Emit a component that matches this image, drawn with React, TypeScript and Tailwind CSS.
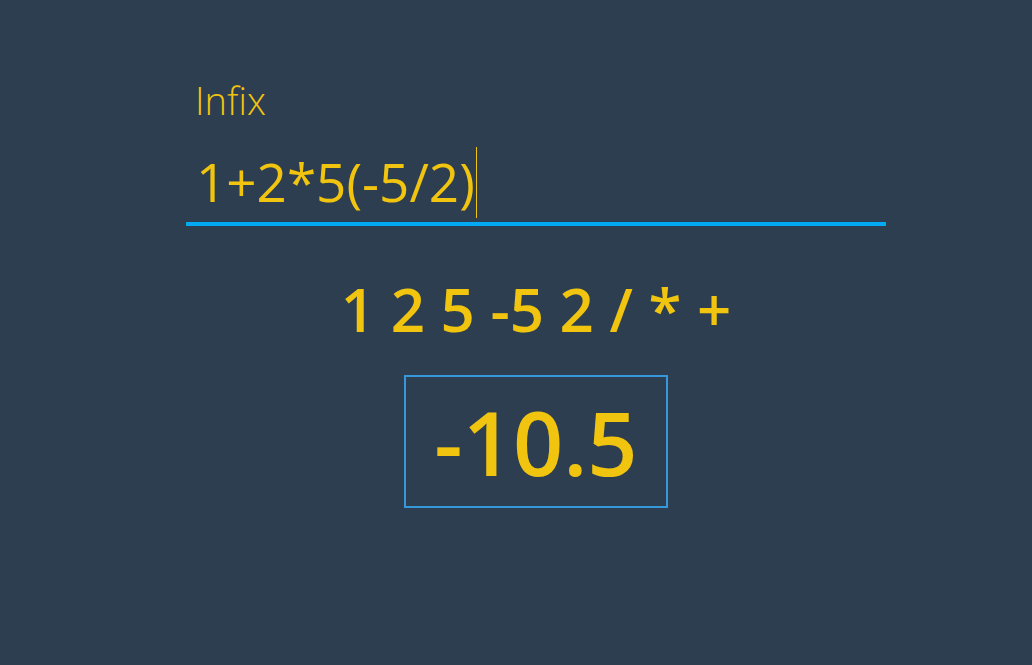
import React from "react";

export default function App() {
  const infix = "1+2*5(-5/2)";
  const postfix = "1 2 5 -5 2 / * +";
  const result = "-10.5";

  return (
    <div
      className="min-h-screen w-full bg-[#2c3e50] text-[#f1c40f]"
      style={{ fontFamily: '"Open Sans", "Noto Sans", sans-serif' }}
    >
      <div className="ml-[186px] w-[700px] pt-[74px]">
        {/* infix field */}
        <label className="block pl-[9px] text-[38px] font-light leading-[52px]">Infix</label>
        <div className="mt-[20px] flex items-center border-b-4 border-[#03a9f4] pb-[4px] pl-[10px]">
          <span className="text-[53px] font-normal leading-[72px] whitespace-pre">{infix}</span>
          <span className="ml-[1px] inline-block h-[71px] w-px bg-[#f1c40f]" />
        </div>

        {/* postfix */}
        <div className="mt-[43px] text-center text-[60px] font-semibold leading-[80px]">{postfix}</div>

        {/* result */}
        <div className="mx-auto mt-[26px] flex h-[133px] w-[264px] items-center justify-center border-2 border-[#3498db]">
          <span className="text-[88px] font-semibold leading-none">{result}</span>
        </div>
      </div>
    </div>
  );
}
